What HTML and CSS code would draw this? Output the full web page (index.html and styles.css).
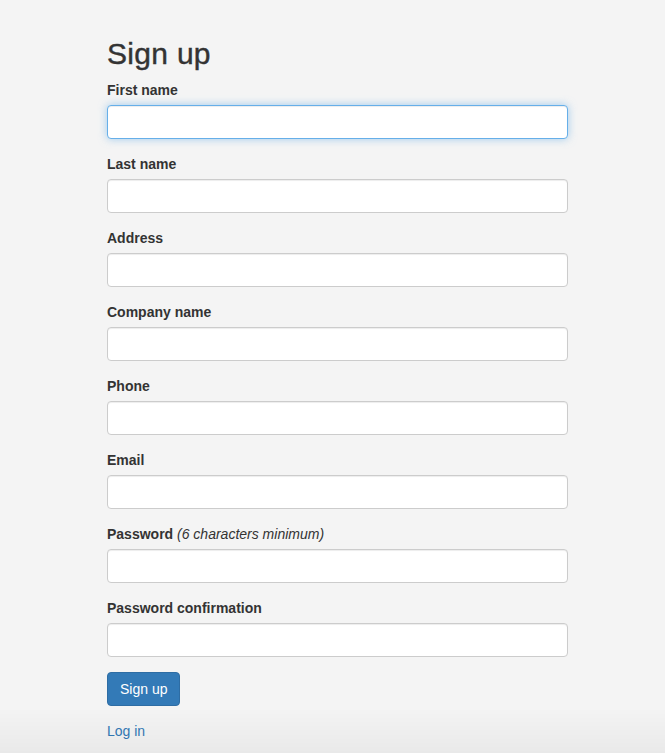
FILE: index.html
```html
<!DOCTYPE html>
<html lang="en">
<head>
  <meta charset="UTF-8">
  <meta name="viewport" content="width=device-width, initial-scale=1.0">
  <title>Sign up</title>
  <link rel="stylesheet" href="styles.css">
</head>
<body>
  <div class="container">
    <h2>Sign up</h2>
    <form class="signup-form">
      <div class="form-group">
        <label for="first_name">First name</label>
        <input type="text" id="first_name" class="form-control is-focused">
      </div>
      <div class="form-group">
        <label for="last_name">Last name</label>
        <input type="text" id="last_name" class="form-control">
      </div>
      <div class="form-group">
        <label for="address">Address</label>
        <input type="text" id="address" class="form-control">
      </div>
      <div class="form-group">
        <label for="company_name">Company name</label>
        <input type="text" id="company_name" class="form-control">
      </div>
      <div class="form-group">
        <label for="phone">Phone</label>
        <input type="text" id="phone" class="form-control">
      </div>
      <div class="form-group">
        <label for="email">Email</label>
        <input type="email" id="email" class="form-control">
      </div>
      <div class="form-group">
        <label for="password">Password <em>(6 characters minimum)</em></label>
        <input type="password" id="password" class="form-control">
      </div>
      <div class="form-group">
        <label for="password_confirmation">Password confirmation</label>
        <input type="password" id="password_confirmation" class="form-control">
      </div>
      <button type="submit" class="btn-primary">Sign up</button>
    </form>
    <a href="#" class="login-link">Log in</a>
  </div>
</body>
</html>
```

FILE: styles.css
```css
html, body {
  height: 100%;
}
body {
  margin: 0;
  background-color: #f4f4f4;
  font-family: 'Liberation Sans', Arial, sans-serif;
  font-size: 14px;
  line-height: 20px;
  color: #333;
}
body::after {
  content: '';
  position: fixed;
  left: 0;
  right: 0;
  bottom: 0;
  height: 45px;
  background: linear-gradient(to bottom, rgba(0, 0, 0, 0), rgba(0, 0, 0, 0.045));
  pointer-events: none;
}
.container {
  width: 461px;
  padding: 17px 0 0 107px;
}
h2 {
  font-size: 30px;
  font-weight: 500;
  line-height: 33px;
  margin: 20px 0 10px;
  letter-spacing: 0.3px;
  -webkit-text-stroke: 0.4px #333;
}
.form-group {
  margin-bottom: 15px;
}
label {
  display: block;
  font-weight: bold;
  margin-bottom: 5px;
}
label em {
  font-weight: normal;
}
.form-control {
  display: block;
  box-sizing: border-box;
  width: 100%;
  height: 34px;
  padding: 6px 12px;
  font-family: inherit;
  font-size: 14px;
  color: #555;
  background-color: #fff;
  border: 1px solid #ccc;
  border-radius: 4px;
  box-shadow: inset 0 1px 1px rgba(0, 0, 0, 0.075);
  outline: none;
}
.form-control.is-focused,
.form-control:focus {
  border-color: #66afe9;
  box-shadow: inset 0 1px 1px rgba(0, 0, 0, 0.075), 0 0 8px rgba(102, 175, 233, 0.6);
}
.btn-primary {
  display: block;
  height: 34px;
  padding: 6px 12px;
  font-family: inherit;
  font-size: 14px;
  line-height: 20px;
  color: #fff;
  background-color: #337ab7;
  border: 1px solid #2e6da4;
  border-radius: 4px;
  cursor: pointer;
}
.login-link {
  display: inline-block;
  margin-top: 15px;
  color: #337ab7;
  text-decoration: none;
}
```
